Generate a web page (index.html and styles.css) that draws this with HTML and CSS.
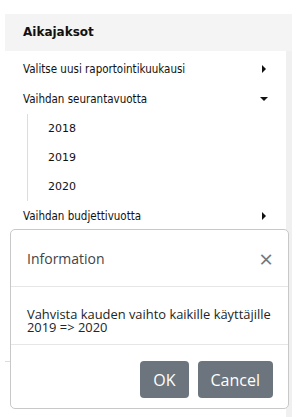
FILE: index.html
```html
<!DOCTYPE html>
<html lang="fi">
<head>
  <title>Aikajaksot</title>
  <link rel="stylesheet" href="styles.css">
</head>
<body>
  <div class="panel">
    <div class="panel-head">Aikajaksot</div>
    <div class="panel-body">
      <div class="menu">
        <div class="item">Valitse uusi raportointikuukausi <span class="caret caret-right"></span></div>
        <div class="item">Vaihdan seurantavuotta <span class="caret caret-down"></span></div>
        <div class="submenu">
          <div class="sub-item">2018</div>
          <div class="sub-item">2019</div>
          <div class="sub-item">2020</div>
        </div>
        <div class="item">Vaihdan budjettivuotta <span class="caret caret-right"></span></div>
        <div class="hidden-block"></div>
        <div class="sep"></div>
        <div class="item item-low">Vahvistetut aikajaksot</div>
      </div>
      <div class="scroll"></div>
    </div>
  </div>

  <div class="dialog">
    <div class="dialog-head">
      <span>Information</span>
      <span class="close">&times;</span>
    </div>
    <div class="dialog-body">Vahvista kauden vaihto kaikille käyttäjille<br>2019 =&gt; 2020</div>
    <div class="dialog-foot">
      <button class="btn">OK</button>
      <button class="btn">Cancel</button>
    </div>
  </div>
</body>
</html>
```
FILE: styles.css
```css
body {
  margin: 0;
  background-color: #fff;
  font-family: "DejaVu Sans", Verdana, sans-serif;
  color: #111;
  overflow: hidden;
}
.panel {
  margin: 14px 0 0 5px;
  width: 287px;
}
.panel-head {
  height: 37px;
  line-height: 37px;
  padding-left: 18px;
  background-color: #f4f4f4;
  font-weight: bold;
  font-size: 12px;
}
.panel-body {
  display: flex;
}
.menu {
  flex: 1;
  padding-top: 3px;
}
.scroll {
  width: 6px;
  background-color: #f0f0f0;
}
.item {
  display: flex;
  justify-content: space-between;
  align-items: center;
  height: 30px;
  padding: 0 20px 0 18px;
  font-family: "DejaVu Sans Condensed", "DejaVu Sans", sans-serif;
  font-size: 11.5px;
}
.item-low {
  margin-top: 46px;
}
.caret {
  width: 0;
  height: 0;
  border-style: solid;
}
.caret-right {
  border-width: 4px 0 4px 4px;
  border-color: transparent transparent transparent #111;
}
.caret-down {
  border-width: 4px 4px 0 4px;
  border-color: #111 transparent transparent transparent;
  margin-right: -2px;
}
.submenu {
  margin-left: 22px;
  border-left: 1px solid #ddd;
  padding: 0 0 0 20px;
}
.sub-item {
  height: 29px;
  line-height: 29px;
  font-size: 11px;
}
.hidden-block {
  height: 130px;
}
.sep {
  border-top: 1px solid #ddd;
}
.dialog {
  position: absolute;
  left: 10px;
  top: 229px;
  width: 277px;
  height: 178px;
  background-color: #fff;
  border: 1px solid #c8c8c8;
  border-radius: 5px;
  font-family: "Open Sans", "Noto Sans", sans-serif;
  color: #212529;
}
.dialog-head {
  display: flex;
  justify-content: space-between;
  align-items: center;
  height: 56px;
  padding: 0 16px;
  border-bottom: 1px solid #e6e6e6;
  font-size: 14px;
  color: #444;
}
.close {
  font-size: 24px;
  color: #777;
  margin-right: -1px;
}
.dialog-body {
  height: 58px;
  padding: 21px 16px 0 16px;
  box-sizing: border-box;
  font-size: 12.9px;
  line-height: 13px;
  border-bottom: 1px solid #e6e6e6;
  white-space: nowrap;
}
.dialog-foot {
  display: flex;
  justify-content: flex-end;
  gap: 9px;
  padding: 16px 15px 0 0;
}
.btn {
  height: 37px;
  padding: 0 13px;
  border: none;
  border-radius: 4px;
  background-color: #6c757d;
  color: #fff;
  font-family: "Open Sans", "Noto Sans", sans-serif;
  font-size: 16px;
}
```
